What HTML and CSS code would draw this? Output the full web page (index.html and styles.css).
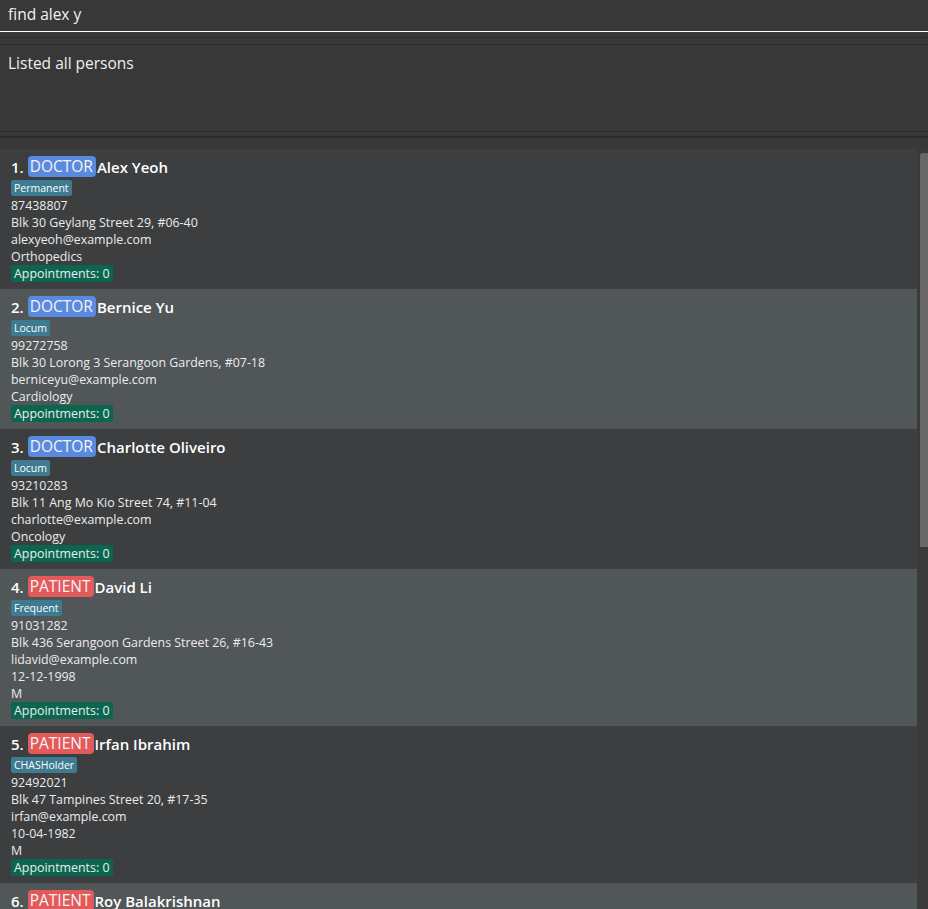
FILE: index.html
```html
<!DOCTYPE html>
<html>
<head>
<meta charset="utf-8">
<link rel="stylesheet" href="styles.css">
</head>
<body>
<div class="app">
  <div class="command">find alex y</div>
  <div class="gap-a"></div>
  <div class="result">Listed all persons</div>
  <div class="gap-b"></div>
  <div class="list-area">
    <div class="cards">
      <div class="card odd">
        <div class="name-row"><span class="idx">1.</span><span class="role doctor">DOCTOR</span><span class="name">Alex Yeoh</span></div>
        <div class="tags"><span class="tag">Permanent</span></div>
        <div class="line">87438807</div>
        <div class="line">Blk 30 Geylang Street 29, #06-40</div>
        <div class="line">alexyeoh@example.com</div>
        <div class="line">Orthopedics</div>
        <div class="line"><span class="appt">Appointments: 0</span></div>
      </div>
      <div class="card even">
        <div class="name-row"><span class="idx">2.</span><span class="role doctor">DOCTOR</span><span class="name">Bernice Yu</span></div>
        <div class="tags"><span class="tag">Locum</span></div>
        <div class="line">99272758</div>
        <div class="line">Blk 30 Lorong 3 Serangoon Gardens, #07-18</div>
        <div class="line">berniceyu@example.com</div>
        <div class="line">Cardiology</div>
        <div class="line"><span class="appt">Appointments: 0</span></div>
      </div>
      <div class="card odd">
        <div class="name-row"><span class="idx">3.</span><span class="role doctor">DOCTOR</span><span class="name">Charlotte Oliveiro</span></div>
        <div class="tags"><span class="tag">Locum</span></div>
        <div class="line">93210283</div>
        <div class="line">Blk 11 Ang Mo Kio Street 74, #11-04</div>
        <div class="line">charlotte@example.com</div>
        <div class="line">Oncology</div>
        <div class="line"><span class="appt">Appointments: 0</span></div>
      </div>
      <div class="card even">
        <div class="name-row"><span class="idx">4.</span><span class="role patient">PATIENT</span><span class="name">David Li</span></div>
        <div class="tags"><span class="tag">Frequent</span></div>
        <div class="line">91031282</div>
        <div class="line">Blk 436 Serangoon Gardens Street 26, #16-43</div>
        <div class="line">lidavid@example.com</div>
        <div class="line">12-12-1998</div>
        <div class="line">M</div>
        <div class="line"><span class="appt">Appointments: 0</span></div>
      </div>
      <div class="card odd">
        <div class="name-row"><span class="idx">5.</span><span class="role patient">PATIENT</span><span class="name">Irfan Ibrahim</span></div>
        <div class="tags"><span class="tag">CHASHolder</span></div>
        <div class="line">92492021</div>
        <div class="line">Blk 47 Tampines Street 20, #17-35</div>
        <div class="line">irfan@example.com</div>
        <div class="line">10-04-1982</div>
        <div class="line">M</div>
        <div class="line"><span class="appt">Appointments: 0</span></div>
      </div>
      <div class="card even">
        <div class="name-row"><span class="idx">6.</span><span class="role patient">PATIENT</span><span class="name">Roy Balakrishnan</span></div>
        <div class="tags"><span class="tag">Frequent</span></div>
        <div class="line">92624417</div>
      </div>
    </div>
    <div class="scroll-track"><div class="scroll-thumb"></div></div>
  </div>
</div>
</body>
</html>
```
FILE: styles.css
```css
html, body {
  margin: 0;
  padding: 0;
  background: #383838;
  overflow: hidden;
}
.app {
  width: 928px;
  height: 909px;
  display: flex;
  flex-direction: column;
  font-family: "Open Sans", "Noto Sans", sans-serif;
  color: #ffffff;
  overflow: hidden;
}
.command {
  flex-shrink: 0;
  height: 32px;
  line-height: 28px;
  padding-left: 8px;
  font-size: 15.5px;
  color: #f2f2f2;
  background: #383838;
  border-bottom: 1px solid #ffffff;
  box-sizing: border-box;
}
.gap-a {
  flex-shrink: 0;
  height: 13px;
  box-sizing: border-box;
  border-top: 5px solid #383838;
  background: #383838;
  box-shadow: inset 0 1px 0 #2a2a2a, inset 0 -1px 0 #2a2a2a;
}
.result {
  flex-shrink: 0;
  height: 86px;
  padding: 7px 8px 0;
  box-sizing: border-box;
  font-size: 15.5px;
  line-height: 22px;
  color: #eeeeee;
  background: #383838;
}
.gap-b {
  flex-shrink: 0;
  height: 7px;
  box-sizing: border-box;
  border-top: 1px solid #2a2a2a;
  border-bottom: 2px solid #2a2a2a;
}
.list-area {
  flex: 1;
  min-height: 0;
  display: flex;
  align-items: flex-start;
  padding-top: 11px;
  background: #383838;
}
.cards {
  width: 917px;
  flex-shrink: 0;
  display: flex;
  flex-direction: column;
}
.card {
  flex-shrink: 0;
  padding: 7px 11px;
}
.card.odd { background: #3c3e3f; }
.card.even { background: #515658; }
.name-row {
  height: 23px;
  padding-bottom: 2px;
  box-sizing: border-box;
  display: flex;
  align-items: center;
  font-size: 15px;
}
.idx {
  font-weight: 600;
  margin-right: 4px;
}
.role {
  padding: 0 3px 0 2px;
  border-radius: 4px;
  line-height: 21px;
  font-size: 15.5px;
  color: #f4f4f4;
  margin-right: 1px;
}
.role.doctor { background: #5a8ae0; }
.role.patient { background: #e35a5b; }
.name {
  font-weight: 600;
}
.tags {
  height: 18px;
  display: flex;
  align-items: center;
}
.tag {
  background: #3e7b91;
  color: #ffffff;
  font-size: 10.5px;
  line-height: 16px;
  padding: 0 3px;
  border-radius: 2px;
}
.line {
  height: 17px;
  line-height: 17px;
  font-size: 12.4px;
  color: #ececec;
}
.appt {
  display: inline-block;
  background: #0b6650;
  padding: 0 3px;
  border-radius: 2px;
}
.scroll-track {
  width: 11px;
  flex-shrink: 0;
  align-self: stretch;
  padding-top: 4px;
  background: #3a3a3a;
}
.scroll-thumb {
  margin-left: 3px;
  width: 8px;
  height: 394px;
  background: #686868;
  border-radius: 3px 0 0 0;
}
```
